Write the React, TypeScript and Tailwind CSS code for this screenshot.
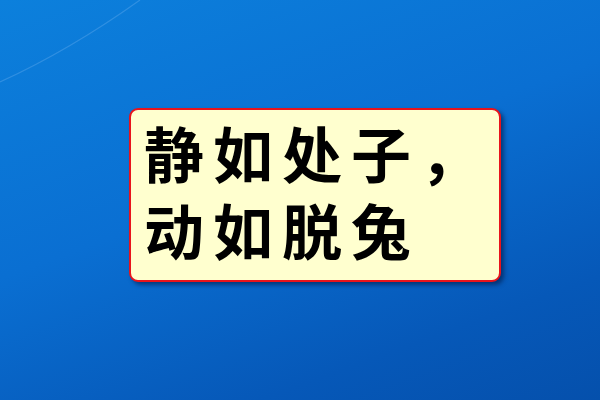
export default function App() {
  return (
    <main className="relative h-[400px] w-[600px] overflow-hidden bg-[linear-gradient(160deg,#0c80dc_0%,#0a6fd2_45%,#0658b8_80%,#0550ac_100%)]">
      {/* faint wallpaper arc */}
      <svg className="absolute left-0 top-0" width="200" height="120" viewBox="0 0 200 120">
        <path d="M0 82 Q70 50 140 0" stroke="#5aa6ea" strokeOpacity="0.45" strokeWidth="1.2" fill="none" />
      </svg>
      <div className="relative pl-[129px] pt-[108px]">
        <div className="h-[174px] w-[372px] rounded-[9px] border-2 border-[#e8141c] bg-[#ffffcf] px-[13px] pt-[3px] shadow-[3px_3px_4px_rgba(0,20,60,0.55)]">
          <p
            className="whitespace-nowrap text-[60px] font-semibold leading-[77px] tracking-[9px] text-black"
            style={{ fontFamily: '"Noto Sans CJK SC", "Noto Sans CJK JP", sans-serif' }}
          >
            静如处子，
            <br />
            动如脱兔
          </p>
        </div>
      </div>
    </main>
  );
}
